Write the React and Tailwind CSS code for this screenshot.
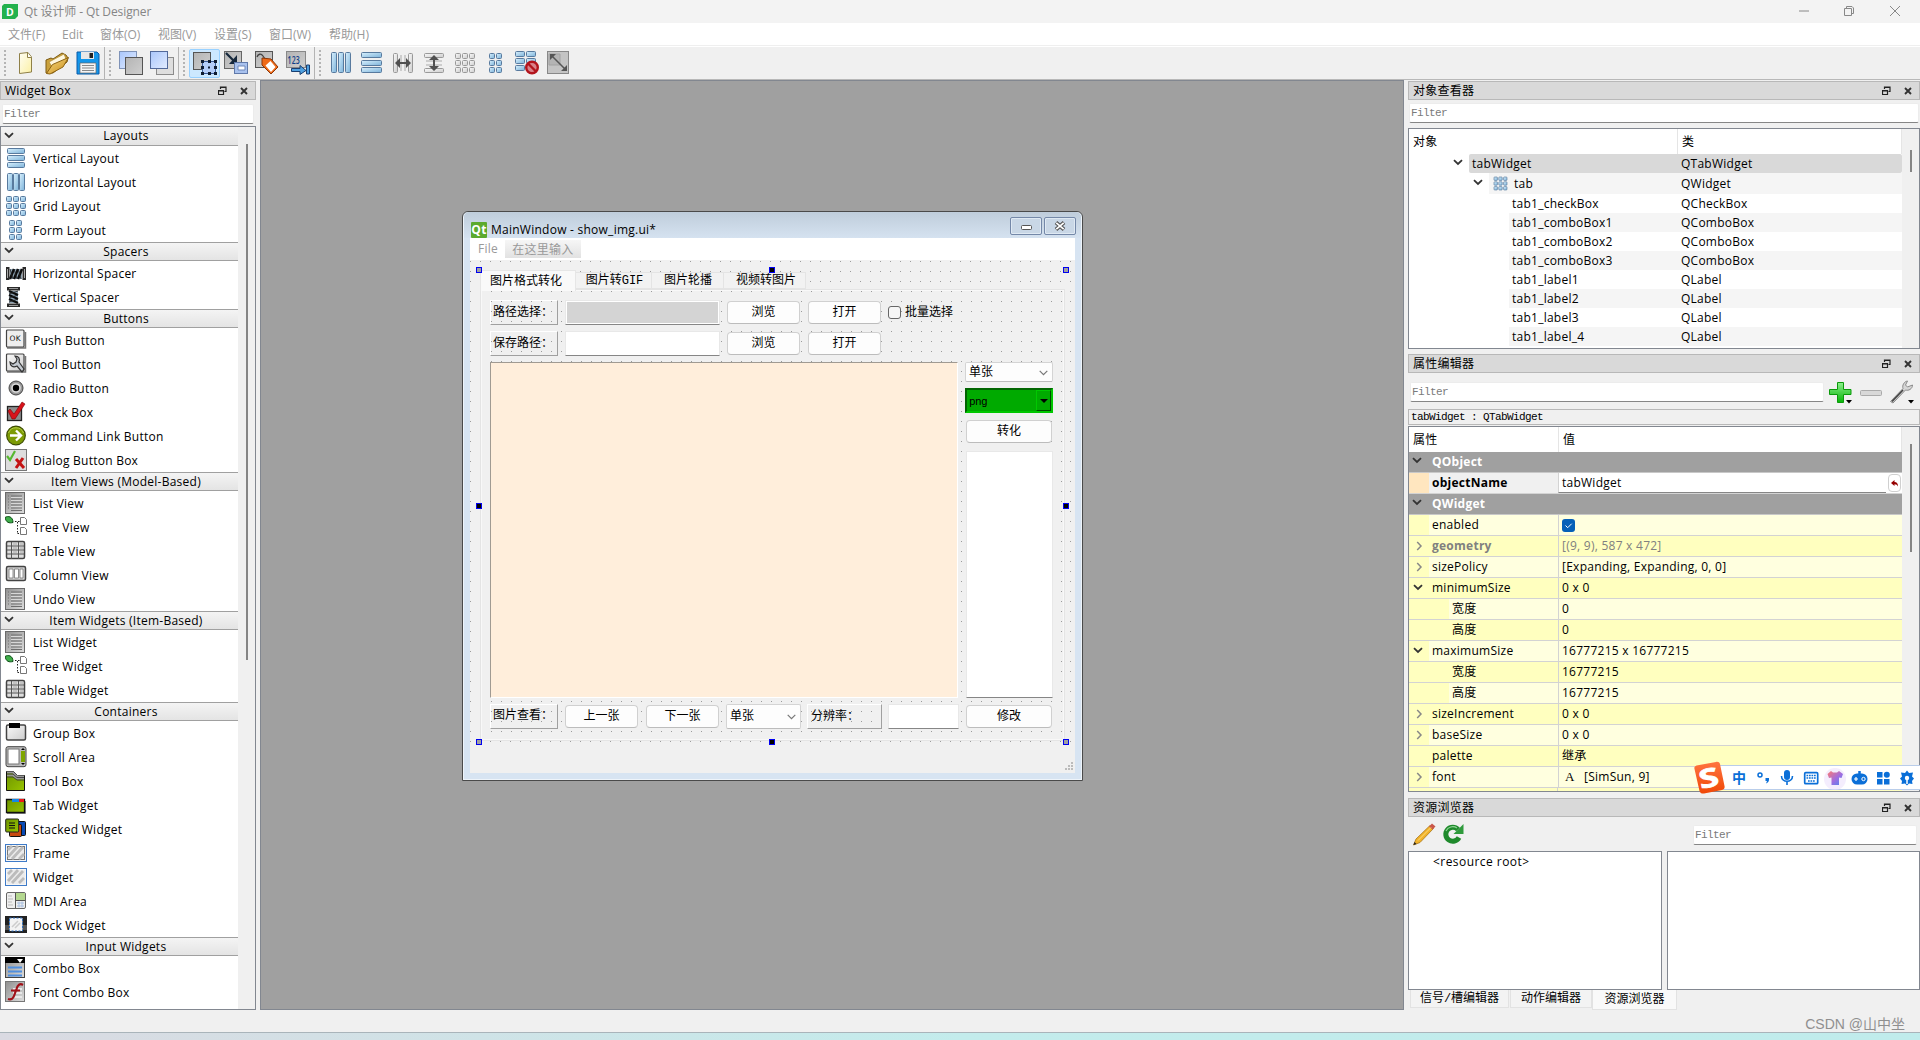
import React from 'react';

const UI = 'font-["Open_Sans","Noto_Sans_CJK_SC",sans-serif]';
const SONG = 'font-["Liberation_Mono","Noto_Sans_CJK_SC",monospace]';

const Svg = ({ w = 22, h = 22, vb, className = '', children }) => (
    <svg width={w} height={h} viewBox={vb || `0 0 ${w} ${h}`} className={`shrink-0 ${className}`} fill="none">
        {children}
    </svg>
);

const Cells = ({ xs, ys, w, h, gray }) => (
    <>
        {xs.map((x) =>
            ys.map((y) => (
                <rect
                    key={`${x}-${y}`}
                    x={x + 0.5}
                    y={y + 0.5}
                    width={w - 1}
                    height={h - 1}
                    rx="1"
                    fill={gray ? 'url(#gGray)' : 'url(#gBlue)'}
                    stroke={gray ? '#999999' : '#587a9e'}
                />
            ))
        )}
    </>
);

const Defs = () => (
    <svg width="0" height="0" className="absolute">
        <defs>
            <linearGradient id="gBlue" x1="0" y1="0" x2="1" y2="1">
                <stop offset="0" stopColor="#d8f0fd" />
                <stop offset="1" stopColor="#7db3da" />
            </linearGradient>
            <linearGradient id="gGray" x1="0" y1="0" x2="1" y2="1">
                <stop offset="0" stopColor="#fafafa" />
                <stop offset="1" stopColor="#cccccc" />
            </linearGradient>
            <linearGradient id="gSteel" x1="0" y1="0" x2="1" y2="1">
                <stop offset="0" stopColor="#8f8f8f" />
                <stop offset="1" stopColor="#dedede" />
            </linearGradient>
            <linearGradient id="gPlate" x1="0" y1="0" x2="1" y2="1">
                <stop offset="0" stopColor="#b4b4b4" />
                <stop offset="1" stopColor="#cfcfcf" />
            </linearGradient>
            <linearGradient id="gSky" x1="0" y1="0" x2="1" y2="1">
                <stop offset="0" stopColor="#a9c6fb" />
                <stop offset="1" stopColor="#e2ecff" />
            </linearGradient>
            <linearGradient id="gLime" x1="0" y1="0" x2="1" y2="1">
                <stop offset="0" stopColor="#6d9400" />
                <stop offset="1" stopColor="#98c400" />
            </linearGradient>
            <linearGradient id="gPage" x1="0" y1="0" x2="1" y2="1">
                <stop offset="0" stopColor="#fffef4" />
                <stop offset="1" stopColor="#fbf0a4" />
            </linearGradient>
            <linearGradient id="gFolder" x1="0" y1="0" x2="1" y2="1">
                <stop offset="0" stopColor="#f8dc80" />
                <stop offset="1" stopColor="#c98c1c" />
            </linearGradient>
            <linearGradient id="gGreen" x1="0" y1="0" x2="0" y2="1">
                <stop offset="0" stopColor="#8df08d" />
                <stop offset="1" stopColor="#06b406" />
            </linearGradient>
            <linearGradient id="gShirt" x1="0" y1="0" x2="1" y2="1">
                <stop offset="0" stopColor="#ff7a70" />
                <stop offset="0.55" stopColor="#a06ce0" />
                <stop offset="1" stopColor="#4b86f0" />
            </linearGradient>
            <linearGradient id="gSogou" x1="0" y1="0" x2="0" y2="1">
                <stop offset="0" stopColor="#ff7440" />
                <stop offset="1" stopColor="#f04808" />
            </linearGradient>
        </defs>
    </svg>
);

const listIcon = (
    <>
        <rect x="0.500" y="0.500" width="19" height="21" fill="url(#gSteel)" stroke="#6a6a6a" />
        <path d="M3 4h1M3 7h1M3 10h1M3 13h1M3 16h1M6 4h11M6 7h11M6 10h11M6 13h11M6 16h11M6 18.500h11" stroke="#6e6e6e" />
        <path d="M6 5.500h11M6 8.500h11M6 11.500h11M6 14.500h11" stroke="#d8d8d8" />
    </>
);

const treeIcon = (
    <>
        <path d="M0 1.500c3-2 8-1 8 5-4 1-7 0-8-5z" fill="#3fae4a" stroke="#0c4d16" />
        <path d="M10 5.500h5M12.500 6v12M12.500 17.500h4" stroke="#222" strokeDasharray="1.500 1.500" />
        <path d="M15.500 1.500h4l2 2v5h-6zM15.500 11.500h4l2 2v5h-6z" fill="#fff" stroke="#777" />
    </>
);

const tableIcon = (
    <>
        <rect x="1.500" y="1.500" width="18" height="17" rx="1.500" fill="#dedede" stroke="#444" strokeWidth="1.500" />
        <path d="M2 6h17M2 10h17M2 14h17" stroke="#555" />
        <path d="M6.500 2v17M13.500 2v17" stroke="#555" />
        <path d="M8 4h4M15 4h3M8 8h4M15 8h3M8 12h4M15 12h3" stroke="#aaa" />
    </>
);

const hatch = <path d="M3 15L13 4M7 17L18 5M14 17l5-5M3 8l4-4" stroke="#bcbcbc" strokeWidth="2.800" />;

const ICONS = {
    vlayout: <Cells xs={[2]} ys={[1, 8, 15]} w={18} h={6} />,
    hlayout: <Cells xs={[2, 8, 14]} ys={[2]} w={6} h={18} />,
    grid: <Cells xs={[1, 8, 15]} ys={[1, 8, 15]} w={6} h={6} />,
    form: <Cells xs={[4, 11]} ys={[1, 8, 15]} w={6} h={6} />,
    hspacer: (
        <>
            <path d="M1 5h3.500v13H1zM17.500 5H21v13h-3.500z" fill="#2a2a2a" />
            <path d="M2.500 7v9M19.500 7v9" stroke="#aaa" />
            <path d="M5 7h12v10H5z" fill="#8ea3b3" />
            <path d="M5 17l4-10M9 17l4-10M13 17l4-10" stroke="#0b0b0b" strokeWidth="2.400" />
            <path d="M5 7l3 10M9 7l3 10M13 7l3 10" stroke="#222" strokeWidth=".8" />
        </>
    ),
    vspacer: (
        <>
            <path d="M2 1h13v3.500H2zM2 17.500h13V21H2z" fill="#2a2a2a" />
            <path d="M4 2.500h9M4 19.500h9" stroke="#999" />
            <path d="M4 5h9v12H4z" fill="#8ea3b3" />
            <path d="M4 5l9 4M4 9l9 4M4 13l9 4" stroke="#0b0b0b" strokeWidth="2.400" />
            <path d="M13 5l-9 3M13 9l-9 3M13 13l-9 3" stroke="#222" strokeWidth=".8" />
        </>
    ),
    push: (
        <>
            <path d="M2 19h18.500V3" stroke="#777" strokeWidth="1.500" />
            <rect x="1.500" y="1" width="17.500" height="17" rx="1" fill="#eee" stroke="#444" strokeWidth="1.200" />
            <text x="10.200" y="12" fontSize="7.500" textAnchor="middle" fill="#111" fontFamily="DejaVu Sans">OK</text>
        </>
    ),
    tool: (
        <>
            <path d="M2 19h18.500V3" stroke="#777" strokeWidth="1.500" />
            <rect x="1.500" y="1" width="17.500" height="17" rx="1" fill="url(#gGray)" stroke="#444" strokeWidth="1.200" />
            <path d="M10 3c4 0 5 3 4 6l5 7-2 3-5-6c-4 2-7 0-7-4l3 2 3-2 1-3z" fill="#c3c9d0" stroke="#333" strokeWidth="1.200" />
        </>
    ),
    radio: (
        <>
            <circle cx="11" cy="11" r="7" fill="#999" stroke="#444" />
            <circle cx="11" cy="11" r="4.800" fill="#ddd" />
            <circle cx="11" cy="11" r="3.200" fill="#000" />
        </>
    ),
    check: (
        <>
            <rect x="2.500" y="5.500" width="14" height="14" fill="#8d8d8d" stroke="#222" strokeWidth="1.300" />
            <path d="M5 8l4 5 8-12 3 2-10 15h-3L3 10z" fill="#d8131b" stroke="#7d0000" strokeWidth=".6" />
        </>
    ),
    command: (
        <>
            <circle cx="11" cy="10.500" r="9.300" fill="#7d9b05" stroke="#3c4c00" strokeWidth="1.200" />
            <path d="M3.500 8a8 8 0 0 1 15 0" stroke="#b7cf4a" />
            <path d="M5 10.500h10M11 5.500l5 5-5 5" stroke="#fff" strokeWidth="2.400" />
        </>
    ),
    dialog: (
        <>
            <rect x="0.500" y="0.500" width="21" height="21" fill="#dddddd" stroke="#777" />
            <path d="M2 7l3 4L10 2" stroke="#57b830" strokeWidth="2.200" />
            <path d="M11 10l8 9M18 9l-7 10" stroke="#c41414" strokeWidth="3" />
        </>
    ),
    list: listIcon,
    tree: treeIcon,
    table: tableIcon,
    column: (
        <>
            <rect x="1.500" y="2.500" width="19" height="14" rx="1.500" fill="#cfcfcf" stroke="#444" strokeWidth="1.500" />
            <path d="M4 5h4v9H4zM9.500 5h4v9h-4zM15 5h3v9h-3z" fill="#fff" stroke="#777" strokeWidth=".8" />
        </>
    ),
    group: (
        <>
            <rect x="1.500" y="3" width="19" height="15" rx="1.500" fill="url(#gGray)" stroke="#444" strokeWidth="1.500" />
            <path d="M4 1h11v5H4z" fill="#000" />
        </>
    ),
    scroll: (
        <>
            <rect x="1" y="0.700" width="20" height="20" rx="2" fill="#bbb" stroke="#444" />
            <rect x="3" y="3" width="11" height="15" fill="#fff" stroke="#777" />
            <path d="M16 5h4v11h-4z" fill="#7ea500" />
            <path d="M16 4l2-2 2 2zM16 17l2 2 2-2z" fill="#000" />
        </>
    ),
    toolbox: (
        <>
            <path d="M1.500 1.500h7l4 4h7v15h-18z" fill="url(#gLime)" stroke="#111" />
            <path d="M2 2.500h6l4 4h7M2 5.500h6l4 3h7" stroke="#999" strokeWidth="2" />
            <path d="M2 4h6l4 3.500h7M2 7h6l4 3h7" stroke="#333" strokeWidth=".8" />
        </>
    ),
    tab: (
        <>
            <path d="M2 19.500h18.500V7" stroke="#888" />
            <path d="M1.500 5.500h18v13h-18z" fill="url(#gLime)" stroke="#111" strokeWidth="1.300" />
            <path d="M7 5h7v3H7z" fill="#1488e8" />
            <path d="M14 5h5v3h-5z" fill="#f01818" />
        </>
    ),
    stacked: (
        <>
            <rect x="8.500" y="3.500" width="12" height="14" rx="1" fill="#0a4ab4" stroke="#111" />
            <rect x="4.500" y="6.500" width="12" height="12" rx="1" fill="#c84a10" stroke="#111" />
            <rect x="0.700" y="1" width="13" height="13" rx="1" fill="url(#gLime)" stroke="#222" />
            <path d="M4 5h6M4 7.500h6M4 10h6" stroke="#111" />
        </>
    ),
    frame: (
        <>
            <rect x="0.500" y="2.500" width="21" height="17" fill="#f6f6f6" stroke="#3f7bc8" />
            <rect x="2.500" y="4.500" width="17" height="13" fill="#ececec" stroke="#777" />
            {hatch}
        </>
    ),
    widget: (
        <>
            <rect x="0.500" y="2.500" width="21" height="17" fill="#f6f6f6" stroke="#3f7bc8" />
            <path d="M2 4h18v14H2z" fill="#ececec" />
            {hatch}
        </>
    ),
    mdi: (
        <>
            <rect x="1.500" y="2.500" width="19" height="16" rx="1.500" fill="#eee" stroke="#666" />
            <path d="M10.500 3h9.500v7h-9.500z" fill="#b4d890" />
            <path d="M10.500 3v15M10.500 10.500H20" stroke="#555" />
            <path d="M3 6h4M3 9h5M3 12h4M3 15h5" stroke="#bbb" />
            <path d="M12 13h7M12 16h7M14 11.500v6M17 11.500v6" stroke="#a8bfe0" />
        </>
    ),
    dock: (
        <>
            <path d="M0 2h22v17H0z" fill="#222" />
            <path d="M0 11h22v5H0z" fill="#777" opacity=".6" />
            <rect x="4.500" y="4" width="13" height="13" fill="#f3f3f3" stroke="#2a6fc4" strokeDasharray="2 1.500" />
            <path d="M7 13l6-6M10 14l5-5" stroke="#ccc" strokeWidth="1.500" />
        </>
    ),
    combo: (
        <>
            <rect x="0.500" y="0.500" width="19" height="20" fill="url(#gSteel)" stroke="#444" />
            <path d="M0 0h20v6H0z" fill="#000" />
            <path d="M12 2h6l-3 4z" fill="#fff" />
            <path d="M3 10.500h14M3 14.500h14M3 18.500h14" stroke="#4f8fe0" strokeWidth="2" />
        </>
    ),
    fontcombo: (
        <>
            <rect x="0.500" y="0.500" width="19" height="20" fill="url(#gSteel)" stroke="#777" />
            <path d="M8 8h9M8 12h9M8 16h9" stroke="#e8e8e8" strokeWidth="2" />
            <path d="M18 4c-3-2-5.500 0-6.500 4L9 15c-1 3-3 4-6 3M6 9.500h9" stroke="#a01018" strokeWidth="2.200" />
        </>
    ),
};

const WIDGETS = [
    ['Layouts', [['vlayout', 'Vertical Layout'], ['hlayout', 'Horizontal Layout'], ['grid', 'Grid Layout'], ['form', 'Form Layout']]],
    ['Spacers', [['hspacer', 'Horizontal Spacer'], ['vspacer', 'Vertical Spacer']]],
    ['Buttons', [['push', 'Push Button'], ['tool', 'Tool Button'], ['radio', 'Radio Button'], ['check', 'Check Box'], ['command', 'Command Link Button'], ['dialog', 'Dialog Button Box']]],
    ['Item Views (Model-Based)', [['list', 'List View'], ['tree', 'Tree View'], ['table', 'Table View'], ['column', 'Column View'], ['list', 'Undo View']]],
    ['Item Widgets (Item-Based)', [['list', 'List Widget'], ['tree', 'Tree Widget'], ['table', 'Table Widget']]],
    ['Containers', [['group', 'Group Box'], ['scroll', 'Scroll Area'], ['toolbox', 'Tool Box'], ['tab', 'Tab Widget'], ['stacked', 'Stacked Widget'], ['frame', 'Frame'], ['widget', 'Widget'], ['mdi', 'MDI Area'], ['dock', 'Dock Widget']]],
    ['Input Widgets', [['combo', 'Combo Box'], ['fontcombo', 'Font Combo Box']]],
];

const Down = ({ className = '' }) => (
    <Svg w={10} h={7} className={className}>
        <path d="M1 1.200l4 3.800 4-3.800" stroke="#333" strokeWidth="1.800" />
    </Svg>
);

const Right = ({ className = '' }) => (
    <Svg w={7} h={10} className={className}>
        <path d="M1.200 1l3.800 4-3.800 4" stroke="#888" strokeWidth="1.500" />
    </Svg>
);

const DockTitle = ({ title }) => (
    <div className="h-[19px] shrink-0 flex items-center bg-[#d9d9d9] border border-[#b8b8b8] pl-1 pr-[7px]">
        <span className="flex-1 leading-none pt-px">{title}</span>
        <Svg w={9} h={10} className="mr-[13px]">
            <path d="M2.500 3V1h5.500v4.500H6.500M2.500 1.500H8M.5 4.500h5v4H.5zM.5 5h5" stroke="#222" strokeWidth="1.200" />
        </Svg>
        <Svg w={8} h={8}>
            <path d="M1 1l6 6M7 1L1 7" stroke="#333" strokeWidth="1.900" />
        </Svg>
    </div>
);

const Filter = ({ className = '' }) => (
    <div className={`h-5 shrink-0 flex items-center bg-white border border-[#ececec] border-b-[#868686] rounded-[2px] pl-[1px] text-[11px] tracking-[-0.6px] text-[#7a7a7a] ${SONG} ${className}`}>
        Filter
    </div>
);

const Tool = ({ active, children }) => (
    <div className={`w-[31px] h-[29px] shrink-0 flex items-center justify-center ${active ? 'bg-[#cce8ff] border border-[#99d1ff] rounded-[2px]' : ''}`}>
        <Svg w={24} h={24}>{children}</Svg>
    </div>
);

const Grip = () => (
    <div className="w-[2px] h-[26px] mx-1 shrink-0 bg-[linear-gradient(#b4b4b4_50%,transparent_50%)] bg-[size:2px_4px]" />
);

const Sep = () => <div className="w-px h-8 shrink-0 bg-[#b4b4b4]" />;

function Toolbar() {
    return (
        <div className="h-8 shrink-0 flex items-center bg-[#f0f0f0]">
            <Grip />
            <Tool>
                <path d="M5.500 2.500L14 1.500l3.500 4.500v15l-12 1.500z" fill="url(#gPage)" stroke="#8f8048" />
                <path d="M13.500 2v4.500h4" fill="#fff" stroke="#8f8048" />
            </Tool>
            <Tool>
                <path d="M1 22L1 9l5-2 2 1L17 2l4 2 2 3-1 4L8 22z" fill="#caa13c" stroke="#7c5a12" />
                <path d="M4 11L19 3l2 5-13 9z" fill="#fff8e0" stroke="#b08a30" strokeWidth=".7" />
                <path d="M1.500 22.500l6-9L23.500 6.500 18 16 5 23z" fill="url(#gFolder)" stroke="#8d6414" />
            </Tool>
            <Tool>
                <path d="M1 1h20l2 2v20H1z" fill="#1496ea" stroke="#0a5aa8" />
                <path d="M5 1h13v7H5z" fill="#e8e8e8" />
                <path d="M13.500 2h3.500v5h-3.500z" fill="#222" />
                <path d="M4 12h16v10H4z" fill="#f4f4f4" stroke="#666" strokeWidth=".7" />
                <path d="M6 14.500h12M6 17h12M6 19.500h12" stroke="#888" />
            </Tool>
            <div className="w-[1px]" />
            <Sep />
            <Grip />
            <Tool>
                <rect x="0.500" y="0.500" width="17" height="17" fill="url(#gSky)" stroke="#7f93b8" />
                <rect x="6.500" y="6.500" width="17" height="17" fill="url(#gPlate)" stroke="#555" />
            </Tool>
            <Tool>
                <rect x="6.500" y="6.500" width="17" height="17" fill="#dedede" stroke="#8b8b8b" />
                <rect x="0.500" y="0.500" width="17" height="17" fill="url(#gSky)" stroke="#52699a" />
            </Tool>
            <div className="w-[1px]" />
            <Sep />
            <Grip />
            <Tool active>
                <rect x="0.500" y="1.500" width="17" height="17" fill="url(#gPlate)" stroke="#555" />
                <rect x="9.500" y="10.500" width="13" height="12" fill="#b4cdf8" stroke="#3b5b96" />
                <path d="M8 9h3v3H8zM15 9h3v3h-3zM21 9h3v3h-3zM8 15h3v3H8zM21 15h3v3h-3zM8 21h3v3H8zM15 21h3v3h-3zM21 21h3v3h-3zM15 15.500h2v2h-2z" fill="#101c30" />
            </Tool>
            <Tool>
                <rect x="0.500" y="0.500" width="17" height="17" fill="url(#gPlate)" stroke="#666" />
                <path d="M2 2l9 9" stroke="#16283c" strokeWidth="2.200" />
                <path d="M13 4v9H5z" fill="#16283c" />
                <rect x="10.500" y="11.500" width="13" height="11" fill="#a9c2ee" stroke="#6079aa" />
                <path d="M14 15h7v4h-7z" fill="#fff" stroke="#6f88bb" />
            </Tool>
            <Tool>
                <rect x="0.500" y="0.500" width="17" height="16" fill="url(#gPlate)" stroke="#555" />
                <path d="M2 6c1-3 4-4 6-1l2 3" stroke="#444" strokeWidth="1.300" />
                <path d="M7 7l9 1 7 8-7 7-9-9z" fill="#ef6a18" stroke="#8b3506" />
                <path d="M10.500 14.500l5-4.500 5 6-4.500 5z" fill="#fff" />
            </Tool>
            <Tool>
                <rect x="0.500" y="0.500" width="19" height="16" fill="url(#gPlate)" stroke="#888" />
                <text x="1.500" y="13" fontSize="10" textLength="12.500" lengthAdjust="spacingAndGlyphs" fontFamily="Open Sans" fontWeight="600" fill="#123f88">123</text>
                <path d="M5.500 17.500h8.500v-3l6 5-6 4v-3H5.500z" fill="#4ea0e0" stroke="#1a3f70" />
                <path d="M20.500 14h3v9h-3z" fill="#4ea0e0" stroke="#1a3f70" />
            </Tool>
            <div className="w-[1px]" />
            <Sep />
            <Grip />
            <Tool><Cells xs={[2, 9, 16]} ys={[1]} w={6} h={21} /></Tool>
            <Tool><Cells xs={[1]} ys={[1, 9, 16]} w={21} h={6} /></Tool>
            <Tool>
                <Cells xs={[2, 17]} ys={[2]} w={5} h={20} gray />
                <path d="M10 4v16M14 4v16" stroke="#aaa" />
                <path d="M4 12l5-5v4h6V7l5 5-5 5v-4H9v4z" fill="#505050" />
            </Tool>
            <Tool>
                <Cells xs={[2]} ys={[2, 17]} w={20} h={5} gray />
                <path d="M4 10h16M4 14h16" stroke="#aaa" />
                <path d="M12 4l5 5h-4v6h4l-5 5-5-5h4V9H7z" fill="#505050" />
            </Tool>
            <Tool><Cells xs={[2, 9, 16]} ys={[2, 9, 16]} w={6} h={6} gray /></Tool>
            <Tool><Cells xs={[5, 12]} ys={[2, 9, 16]} w={6} h={6} /></Tool>
            <Tool>
                <Cells xs={[0]} ys={[0, 7, 14]} w={10} h={6} />
                <Cells xs={[11]} ys={[0, 7]} w={10} h={6} />
                <circle cx="17" cy="16.500" r="5.800" fill="#d9828a" stroke="#b3141c" strokeWidth="2.400" />
                <path d="M13 12.500l8 8" stroke="#b3141c" strokeWidth="2.400" />
            </Tool>
            <Tool>
                <rect x="1.500" y="0.500" width="21" height="22" fill="#c4c4c4" stroke="#888" />
                <path d="M3 3h11v11H3z" fill="#b4b4b4" stroke="#a2a2a2" />
                <path d="M6 5l13 13" stroke="#555" strokeWidth="1.500" />
                <path d="M4 3h6l-6 6zM21 20h-6l6-6z" fill="#555" />
            </Tool>
        </div>
    );
}

function WidgetBox() {
    return (
        <div className="w-[260px] shrink-0 flex flex-col pt-px">
            <div className="w-[256px] flex flex-col h-full">
                <DockTitle title="Widget Box" />
                <Filter className="mt-[4px] mx-[2px]" />
                <div className="mt-[2px] h-[884px] flex border border-[#828790] bg-[#f0f0f0]">
                    <div className="w-[237px] bg-white">
                        {WIDGETS.map(([name, items], i) => (
                            <div key={name}>
                                <div className={`h-[19px] flex items-center border-b border-[#a0a0a0] bg-linear-to-b from-[#f4f4f4] to-[#e4e4e4] ${i ? 'border-t' : ''}`}>
                                    <Down className="ml-[3px] -mt-[2px]" />
                                    <span className="flex-1 text-center leading-none">{name}</span>
                                </div>
                                {items.map(([icon, label]) => (
                                    <div key={label} className="h-6 flex items-center pl-1 gap-[6px]">
                                        <Svg>{ICONS[icon]}</Svg>
                                        <span className="mt-[2px]">{label}</span>
                                    </div>
                                ))}
                            </div>
                        ))}
                    </div>
                    <div className="w-[2px] h-[516px] mt-[17px] ml-[8px] bg-[#858585]" />
                </div>
            </div>
        </div>
    );
}

const DOTS = 'bg-[conic-gradient(at_1px_1px,transparent_75%,#9c9c9c_0)] bg-[size:10px_10px]';

const Btn = ({ children, className = 'w-[73px]' }) => (
    <div className={`h-[23px] shrink-0 flex items-center justify-center pt-px bg-[#fdfdfd] border border-[#d0d0d0] border-b-[#bcbcbc] rounded-[4px] ${className}`}>
        {children}
    </div>
);

const Lbl = ({ children, className = 'w-[68px] pl-[2px]' }) => (
    <div className={`h-[25px] shrink-0 flex items-center pt-px border border-t-white border-l-white border-r-[#a0a0a0] border-b-[#a0a0a0] ${className}`}>
        {children}
    </div>
);

const Edit = ({ className }) => (
    <div className={`h-[25px] shrink-0 border border-[#e8e8e8] border-b-[#868686] ${className}`} />
);

const Combo = ({ children, className }) => (
    <div className={`shrink-0 flex items-center justify-between pt-px bg-[#fdfdfd] border border-[#d4d4d4] border-b-[#bcbcbc] rounded-[2px] pl-[3px] pr-[4px] ${className}`}>
        {children}
        <Svg w={9} h={6}>
            <path d="M.7 .8l3.800 3.800L8.300 .8" stroke="#777" strokeWidth="1.200" />
        </Svg>
    </div>
);

const HANDLES = [
    ['left-[6px] top-[7px]', false], ['left-[299px] top-[7px]', true], ['left-[593px] top-[7px]', false],
    ['left-[6px] top-[243px]', true], ['left-[593px] top-[243px]', true],
    ['left-[6px] top-[479px]', false], ['left-[299px] top-[479px]', true], ['left-[593px] top-[479px]', false],
];

const TABS = [
    ['图片转GIF', 'w-[76px] pl-[2px]'],
    ['图片轮播', 'w-[72px] pl-[1px]'],
    ['视频转图片', 'w-[82px] pl-[3px]'],
];

function FormWindow() {
    return (
        <div className="absolute left-[201px] top-[130px] w-[621px] h-[570px] border border-[#4a4a4a] rounded-t-[6px] bg-[#d7e4f2] shadow-[inset_0_0_0_1px_#eef4fa] px-[7px] pb-[7px] flex flex-col">
            <div className="h-[26px] -mx-[6px] px-[6px] shrink-0 flex items-center rounded-t-[5px] bg-linear-to-b from-[#bfcddb] to-[#d5e2f0]">
                <Svg w={17} h={16} className="mt-[9px] ml-px">
                    <rect width="16" height="16" rx="1" fill="#5caa2e" />
                    <text x="8" y="12" fontSize="12" fontWeight="700" textAnchor="middle" fill="#fff" fontFamily="Open Sans">Qt</text>
                </Svg>
                <span className="flex-1 ml-[3px] mt-[10px]">MainWindow - show_img.ui*</span>
                <div className="flex gap-[2px] mt-[2px] -mr-px">
                    <div className="w-8 h-[18px] flex items-center justify-center border border-[#7488a8] rounded-[2px] bg-[#c9d7e6] shadow-[inset_0_0_0_1px_#dfe9f3]">
                        <Svg w={11} h={5} className="mt-[2px]"><rect x=".5" y=".5" width="10" height="4" rx="1" fill="#fff" stroke="#555" /></Svg>
                    </div>
                    <div className="w-8 h-[18px] flex items-center justify-center border border-[#7488a8] rounded-[2px] bg-[#c9d7e6] shadow-[inset_0_0_0_1px_#dfe9f3]">
                        <Svg w={12} h={10}>
                            <path d="M2 1.500l8 7M10 1.500l-8 7" stroke="#555" strokeWidth="3.800" />
                            <path d="M2.300 1.800l7.400 6.400M9.700 1.800L2.300 8.200" stroke="#fff" strokeWidth="1.700" />
                        </Svg>
                    </div>
                </div>
            </div>
            <div className="h-[22px] shrink-0 flex items-start bg-white text-[#999]">
                <span className="ml-[8px] w-[27px] mt-[3px]">File</span>
                <span className="w-[76px] h-[18px] mt-[2px] pt-[2px] flex items-center justify-center bg-linear-to-b from-[#f6f6f6] to-[#e2e2e2]">在这里输入</span>
            </div>
            <div className={`relative flex-1 bg-[#f0f0f0] tracking-normal ${SONG}`}>
                <div className={`h-[488px] overflow-hidden bg-[position:0_1px] ${DOTS}`}>
                    <div className="ml-[10px] mt-[10px] w-[585px]">
                        <div className="h-[20px] flex items-start">
                            <div className="relative w-[96px] h-[21px] flex items-center pl-[9px] pt-px bg-[#f9f9f9] border border-b-0 border-[#e6e6e6]">图片格式转化</div>
                            {TABS.map(([label, size]) => (
                                <div key={label} className={`h-[17px] mt-[2px] pt-px flex items-center justify-center bg-[#f2f2f2] border border-l-0 border-[#e4e4e4] ${size}`}>{label}</div>
                            ))}
                        </div>
                        <div className={`h-[452px] border border-[#e4e4e4] pl-[9px] pt-[10px] flex flex-col gap-[6px] -mt-px bg-[#f0f0f0] bg-[position:0_1px] shadow-[inset_0_0_0_1px_#f8f8f8] ${DOTS}`}>
                            <div className="h-[25px] flex items-center">
                                <Lbl>路径选择：</Lbl>
                                <Edit className="ml-[7px] w-[155px] bg-[#d4d4d4] shadow-[inset_0_0_0_1px_#fff]" />
                                <Btn className="ml-[7px] w-[73px]">浏览</Btn>
                                <Btn className="ml-[8px] w-[73px]">打开</Btn>
                                <div className="ml-[7px] flex items-center gap-[4px]">
                                    <div className="w-[13px] h-[13px] border border-[#666] rounded-[3px] bg-[#f6f6f6]" />
                                    <span className="pt-px">批量选择</span>
                                </div>
                            </div>
                            <div className="h-[25px] flex items-center">
                                <Lbl>保存路径：</Lbl>
                                <Edit className="ml-[7px] w-[155px] bg-white" />
                                <Btn className="ml-[7px] w-[73px]">浏览</Btn>
                                <Btn className="ml-[8px] w-[73px]">打开</Btn>
                            </div>
                            <div className="h-[336px] flex gap-[7px]">
                                <div className="w-[468px] bg-[#ffeedb] border border-t-[#a09a92] border-l-[#a09a92] border-r-white border-b-white" />
                                <div className="w-[88px] flex flex-col">
                                    <Combo className="h-[20px] w-full">单张</Combo>
                                    <div className="mt-[6px] h-[25px] flex items-center justify-between bg-[#00aa00] border-2 border-t-[#006400] border-l-[#006400] border-r-[#00c800] border-b-[#00c800] pl-[2px] text-[11px] tracking-[-0.6px]">
                                        <span className="pt-[2px]">png</span>
                                        <div className="w-[15px] h-full flex items-center justify-center border border-t-[#00c800] border-l-[#00c800] border-r-[#004a00] border-b-[#004a00]">
                                            <Svg w={8} h={4}><path d="M0 0h8L4 4z" fill="#000" /></Svg>
                                        </div>
                                    </div>
                                    <Btn className="mt-[7px] mx-[1px]">转化</Btn>
                                    <div className="mt-[8px] ml-px flex-1 bg-white border border-[#e8e8e8] border-b-[#868686]" />
                                </div>
                            </div>
                            <div className="h-[25px] flex items-center">
                                <Lbl><span className="-mt-[3px]">图片查看：</span></Lbl>
                                <Btn className="ml-[7px] w-[73px]">上一张</Btn>
                                <Btn className="ml-[8px] w-[73px]">下一张</Btn>
                                <Combo className="ml-[7px] w-[75px] h-[25px]">单张</Combo>
                                <Lbl className="ml-[6px] w-[75px] pl-[3px]">分辨率：</Lbl>
                                <Edit className="ml-[6px] w-[71px] bg-white" />
                                <Btn className="ml-[7px] w-[86px]">修改</Btn>
                            </div>
                        </div>
                    </div>
                </div>
                {HANDLES.map(([pos, solid]) => (
                    <div key={pos} className={`absolute w-[6px] h-[6px] border border-[#0000f0] ${pos} ${solid ? 'bg-black' : 'bg-[#a0a0a0]'}`} />
                ))}
                <Svg w={8} h={9} className="absolute right-[2px] bottom-[2px]">
                    <path d="M6 0h2v2H6zM3 3h2v2H3zM6 3h2v2H6zM0 6h2v2H0zM3 6h2v2H3zM6 6h2v2H6z" fill="#bbb" />
                </Svg>
            </div>
        </div>
    );
}

const OBJECTS = [
    ['tab1_checkBox', 'QCheckBox'],
    ['tab1_comboBox1', 'QComboBox'],
    ['tab1_comboBox2', 'QComboBox'],
    ['tab1_comboBox3', 'QComboBox'],
    ['tab1_label1', 'QLabel'],
    ['tab1_label2', 'QLabel'],
    ['tab1_label3', 'QLabel'],
    ['tab1_label_4', 'QLabel'],
];

function ObjectInspector() {
    return (
        <>
            <DockTitle title="对象查看器" />
            <Filter className="mt-[3px] mx-[1px]" />
            <div className="mt-[5px] h-[221px] shrink-0 flex border border-[#828790] bg-[#f0f0f0]">
                <div className="w-[493px] bg-white">
                    <div className="h-[25px] flex items-center">
                        <span className="w-[268px] pl-1">对象</span>
                        <span className="flex-1 h-full flex items-center border-x border-[#e5e5e5] pl-1">类</span>
                    </div>
                    <div className="h-[19px] flex items-center pl-[44px]">
                        <Down className="mr-[6px] -mt-[2px]" />
                        <div className="flex-1 h-full flex items-center bg-[#d9d9d9] rounded-[2px]">
                            <span className="w-[212px] pl-[3px]">tabWidget</span>QTabWidget
                        </div>
                    </div>
                    <div className="h-[21px] flex items-center pl-[64px]">
                        <Down className="mr-[6px] -mt-[2px]" />
                        <div className="flex-1 h-full flex items-center bg-[#f5f5f5]">
                            <Svg w={15} h={15} vb="0 0 22 22" className="ml-[4px] mr-[6px]">{ICONS.grid}</Svg>
                            <span className="w-[167px]">tab</span>QWidget
                        </div>
                    </div>
                    {OBJECTS.map(([name, cls], i) => (
                        <div key={name} className={`h-[19px] flex items-center ml-[100px] ${i % 2 ? 'bg-[#f5f5f5]' : ''}`}>
                            <span className="w-[172px] pl-[3px]">{name}</span>{cls}
                        </div>
                    ))}
                </div>
                <div className="w-[2px] h-[22px] mt-[21px] ml-[8px] bg-[#858585]" />
            </div>
        </>
    );
}

const PROPS = [
    { name: 'enabled', check: true },
    { name: 'geometry', value: '[(9, 9), 587 x 472]', arrow: 'r', dim: true },
    { name: 'sizePolicy', value: '[Expanding, Expanding, 0, 0]', arrow: 'r' },
    { name: 'minimumSize', value: '0 x 0', arrow: 'd' },
    { name: '宽度', value: '0', sub: true },
    { name: '高度', value: '0', sub: true },
    { name: 'maximumSize', value: '16777215 x 16777215', arrow: 'd' },
    { name: '宽度', value: '16777215', sub: true },
    { name: '高度', value: '16777215', sub: true },
    { name: 'sizeIncrement', value: '0 x 0', arrow: 'r' },
    { name: 'baseSize', value: '0 x 0', arrow: 'r' },
    { name: 'palette', value: '继承' },
    { name: 'font', value: '[SimSun, 9]', arrow: 'r', font: true },
];

const Group = ({ children }) => (
    <div className="h-[21px] flex items-center bg-[#a0a0a0] border-b border-[#c8c8c8] text-white font-bold">
        <Down className="ml-[3px] mr-[10px] -mt-[4px]" />
        {children}
    </div>
);

function PropertyEditor() {
    return (
        <>
            <DockTitle title="属性编辑器" />
            <div className="h-[36px] shrink-0 flex items-center pl-[2px]">
                <Filter className="w-[414px] mt-[2px]" />
                <Svg w={24} h={24} className="ml-[5px] mt-[3px]">
                    <path d="M8.500 1.500h6v7h7.500v5h-7.500v8h-6v-8H.500v-5h8z" fill="url(#gGreen)" stroke="#0a9a0a" />
                    <path d="M17 19h6l-3 3.500z" fill="#000" />
                </Svg>
                <Svg w={22} h={6} className="ml-[7px] mt-[3px]"><rect x=".5" y=".5" width="21" height="5" rx="1" fill="#d8d8d8" stroke="#aaa" /></Svg>
                <Svg w={24} h={24} className="ml-[8px] mt-[1px]">
                    <path d="M0.500 21.500L13 8.500c-1-3 1-7 4.500-7.500l-2 4 2 2 5-2c0 4-4 6-7 5L3 23z" fill="#d6d6d6" stroke="#8a8a8a" />
                    <path d="M2 21.500L13 10" stroke="#444" strokeWidth="1.600" />
                    <path d="M18 20h6l-3 3.500z" fill="#000" />
                </Svg>
            </div>
            <div className={`h-4 shrink-0 flex items-center border border-[#b8b8b8] pl-[2px] text-[11px] tracking-[-0.6px] whitespace-pre ${SONG}`}>tabWidget : QTabWidget</div>
            <div className="mt-px h-[366px] shrink-0 flex border border-[#828790] bg-[#f0f0f0] overflow-hidden">
                <div className="w-[493px] bg-white">
                    <div className="h-[25px] flex items-center">
                        <span className="w-[149px] pl-1">属性</span>
                        <span className="flex-1 h-full flex items-center border-x border-[#e5e5e5] pl-1">值</span>
                    </div>
                    <Group>QObject</Group>
                    <div className="h-[21px] flex border-b border-[#d3d3d3]">
                        <div className="w-5 bg-[#ffe6bf]" />
                        <div className="w-[129px] pl-[3px] flex items-center bg-[#f0f0f0] font-bold">objectName</div>
                        <div className="w-[328px] pl-[3px] flex items-center border-l border-l-[#d3d3d3] border-b border-b-[#868686]">tabWidget</div>
                        <div className="ml-[2px] w-[13px] h-[18px] mt-px flex items-center justify-center border border-[#d0d0d0] rounded-[4px]">
                            <Svg w={8} h={7}><path d="M0 3l3.500-3v2C6 2 7 3.500 7 6.500 6 5 5.500 4.300 3.500 4.300V6z" fill="#960000" /></Svg>
                        </div>
                    </div>
                    <Group>QWidget</Group>
                    {PROPS.map((p, i) => (
                        <div key={i} className={`h-[21px] flex border-b border-[#d3d3d3] ${i % 2 ? 'bg-[#ffffbf]' : 'bg-[#ffffdf]'} ${p.dim ? 'text-[#808080]' : ''}`}>
                            <div className={`${p.sub ? 'w-10' : 'w-5'} flex items-center bg-[#ffffbf]`}>
                                {p.arrow === 'r' && <Right className="ml-[7px]" />}
                                {p.arrow === 'd' && <Down className="ml-[4px] -mt-[2px]" />}
                            </div>
                            <div className={`${p.sub ? 'w-[109px]' : 'w-[129px]'} pl-[3px] flex items-center ${p.dim ? 'font-bold' : ''}`}>{p.name}</div>
                            <div className="flex-1 border-l border-[#d3d3d3] pl-[3px] flex items-center">
                                {p.check && (
                                    <Svg w={13} h={13}>
                                        <rect width="13" height="13" rx="3" fill="#0560b8" />
                                        <path d="M3.500 6.500l2.200 2.200 4-4" stroke="#fff" />
                                    </Svg>
                                )}
                                {p.font && <span className="w-[22px] pl-[3px] font-['Liberation_Serif',serif] text-[13px]">A</span>}
                                {p.value}
                            </div>
                        </div>
                    ))}
                    <div className="h-[4px] flex bg-[#ffffbf]"><div className="w-[149px] border-r border-[#d3d3d3]" /></div>
                </div>
                <div className="w-[2px] h-[108px] mt-[17px] ml-[8px] bg-[#858585]" />
            </div>
        </>
    );
}

function ResourceBrowser() {
    return (
        <>
            <DockTitle title="资源浏览器" />
            <div className="h-[34px] shrink-0 flex items-center pl-[5px] pr-[3px]">
                <Svg w={23} h={23} className="mt-px">
                    <path d="M0.500 22l2.500-6L17 2.500l3.500 3L7 19.500z" fill="#f2b32a" stroke="#a8761a" strokeWidth=".8" />
                    <path d="M16 3.500L19 .5l3.500 3-3 3z" fill="#c9574a" />
                    <path d="M5 17.500L18 4.500" stroke="#fbdc7e" />
                    <path d="M.5 22l1-3 2 2z" fill="#222" />
                </Svg>
                <Svg w={22} h={22} className="ml-[6px]">
                    <path d="M17 14.500a7 7 0 1 1-1-8" stroke="#1f8a2c" strokeWidth="5" />
                    <path d="M21.500 1v10h-10z" fill="#2f9a3c" />
                    <path d="M4 8a7.500 7.500 0 0 1 11-3" stroke="#8ed494" strokeWidth="1.200" />
                </Svg>
                <Filter className="ml-auto w-[224px] mt-px" />
            </div>
            <div className="h-[139px] shrink-0 flex gap-[5px]">
                <div className="w-[254px] border border-[#828790] bg-white pl-[24px] pt-[2px] tracking-[0.45px]">&lt;resource root&gt;</div>
                <div className="flex-1 border border-[#828790] bg-white" />
            </div>
            <div className={`h-[20px] shrink-0 flex items-start pl-[2px] tracking-normal ${SONG}`}>
                <div className="w-[99px] h-[18px] flex items-center justify-center border border-t-0 border-[#e2e2e2] bg-[#f3f3f3]">信号/槽编辑器</div>
                <div className="w-[82px] h-[18px] ml-px flex items-center justify-center border border-t-0 border-[#e2e2e2] bg-[#f3f3f3]">动作编辑器</div>
                <div className="w-[85px] h-[20px] flex items-center justify-center border border-t-0 border-[#e2e2e2] bg-[#f9f9f9]">资源浏览器</div>
            </div>
        </>
    );
}

function ImeBar() {
    return (
        <div className="absolute left-[1710px] top-[765px] w-[210px] h-[25px] flex items-center bg-white border-y border-[#b9cdea]">
            <Svg w={34} h={34} className="-ml-[18px]">
                <path d="M2.500 8c-.5-2 .5-3 2-3.500L24 1c2-.5 3.500.5 4 2l4.500 22c.5 2-.5 3.500-2.500 4L12 32.500c-2 .4-4-.5-4.500-2.500z" fill="url(#gSogou)" />
                <text x="17" y="26" fontSize="26" fontWeight="700" textAnchor="middle" fill="#fff" stroke="#fff" strokeWidth=".8" textLength="20" lengthAdjust="spacingAndGlyphs" fontFamily="Open Sans" transform="rotate(-12 17 17)">S</text>
            </Svg>
            <Svg w={194} h={24}>
                <text x="6" y="17" fontSize="14" fontWeight="700" fill="#0a6fd8" fontFamily="Noto Sans CJK SC">中</text>
                <circle cx="34" cy="9" r="2" stroke="#0a6fd8" strokeWidth="1.500" />
                <path d="M39.500 12h3.500c.5 3-1 5-3 5.500l1-2.500h-1.500z" fill="#0a6fd8" />
                <rect x="58" y="4" width="6" height="10" rx="3" fill="#0a6fd8" />
                <path d="M55.500 10c0 7 11 7 11 0M61 15v4" stroke="#0a6fd8" strokeWidth="1.600" />
                <rect x="78.700" y="6.700" width="13" height="11" rx="1" stroke="#0a6fd8" strokeWidth="1.700" />
                <path d="M80.500 9.500h9.500M80.500 12h9.500M82 15h7" stroke="#0a6fd8" strokeWidth="1.500" strokeDasharray="1.700 .8" />
                <circle cx="109" cy="13" r="11" fill="#eadcfb" opacity=".5" />
                <path d="M105 5l2 1.500h4L113 5l4 3-1.500 4-2.500-.5V19h-7.500v-7.500l-2.500.5L101.500 8z" fill="url(#gShirt)" />
                <rect x="125.500" y="7.500" width="16" height="11" rx="5.500" fill="#0a6fd8" />
                <path d="M133.500 5v4" stroke="#0a6fd8" strokeWidth="2.500" />
                <circle cx="137.500" cy="13" r="1.700" stroke="#fff" />
                <path d="M128 13h4M130 11v4" stroke="#fff" strokeWidth="1.200" />
                <path d="M151 6h5.500v5.500H151zM151 13h5.500v5.500H151zM158 13h5.500v5.500H158z" fill="#0a6fd8" />
                <circle cx="160.800" cy="8.700" r="3" fill="#0a6fd8" />
                <path d="M181 4.500l2 2.500 4-.5-1 4 2 2-2 2.500.5 3-3.500-.5-2 2-2-2-3.500.5.500-3-2-2.500 2-2-1-4 4 .5z" fill="#0a6fd8" />
                <circle cx="181" cy="12" r="2.200" fill="#fff" />
                <path d="M181 12v6" stroke="#fff" strokeWidth="1.500" />
            </Svg>
        </div>
    );
}

const MENUS = [
    ['文件(F)', 'w-[54px]'],
    ['Edit', 'w-[38px]'],
    ['窗体(O)', 'w-[58px]'],
    ['视图(V)', 'w-[56px]'],
    ['设置(S)', 'w-[55px]'],
    ['窗口(W)', 'w-[60px]'],
    ['帮助(H)', 'w-[56px]'],
];

export default function App() {
    return (
        <div className={`relative w-[1920px] h-[1040px] flex flex-col overflow-hidden bg-[#f0f0f0] text-black text-[12px] leading-[16px] tracking-[0.25px] whitespace-nowrap ${UI}`}>
            <Defs />
            <div className="h-[23px] shrink-0 flex items-center bg-[#f3f3f3] text-[#858585] pl-[2px]">
                <Svg w={16} h={15} className="mr-[6px]">
                    <path d="M2 0h14v12l-3 3H0V2z" fill="#23b14d" />
                    <text x="8" y="11.500" fontSize="10.500" fontWeight="700" textAnchor="middle" fill="#fff" fontFamily="Open Sans">D</text>
                </Svg>
                <span className="flex-1 tracking-[-0.1px] pt-px">Qt 设计师 - Qt Designer</span>
                <Svg w={110} h={12} className="mr-[15px] -mt-[2px]">
                    <path d="M4 6h10" stroke="#888" />
                    <path d="M49.500 3.500h7v7h-7zM51.500 3.500v-2h5.500l1.500 1.500v5.500h-2" stroke="#888" />
                    <path d="M95 1l10 10M105 1L95 11" stroke="#888" />
                </Svg>
            </div>
            <div className="h-[22px] shrink-0 flex items-center bg-white text-[#999] pl-[8px] pt-[2px] tracking-normal">
                {MENUS.map(([label, w]) => (
                    <span key={label} className={w}>{label}</span>
                ))}
            </div>
            <div className="h-px shrink-0 bg-[#efefef]" />
            <div className="h-px shrink-0 bg-white" />
            <Toolbar />
            <div className="h-px shrink-0 bg-[#b8b8b8]" />
            <div className="h-[930px] shrink-0 flex">
                <WidgetBox />
                <div className="relative w-[1144px] shrink-0 bg-[#a0a0a0] border border-[#828790]">
                    <FormWindow />
                </div>
                <div className="w-[516px] pl-1 pt-px flex flex-col">
                    <ObjectInspector />
                    <div className="h-[5px] shrink-0" />
                    <PropertyEditor />
                    <div className="h-[6px] shrink-0" />
                    <ResourceBrowser />
                </div>
            </div>
            <div className="flex-1 flex items-center justify-end pr-[15px] font-['Liberation_Sans','Noto_Sans_CJK_SC',sans-serif] text-[14px] tracking-normal text-[#8f8f8f]">
                <span className="mt-[5px]">CSDN @山中坐</span>
            </div>
            <div className="h-2 shrink-0 border-t border-[#a9b4ba] bg-linear-to-r from-[#dadae2] via-[#c3ecec] to-[#c0ecec]" />
            <ImeBar />
        </div>
    );
}
